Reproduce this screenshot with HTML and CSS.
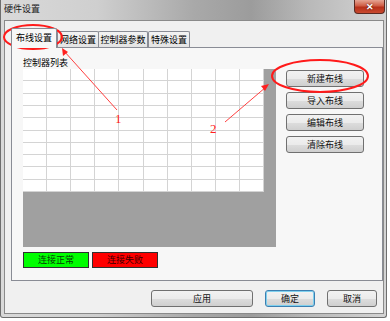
FILE: index.html
```html
<!DOCTYPE html>
<html lang="zh-CN">
<head>
<meta charset="utf-8">
<title>硬件设置</title>
<link rel="stylesheet" href="styles.css">
</head>
<body>
<div class="window">
  <div class="titlebar">
    <span class="title">硬件设置</span>
    <span class="close">✕</span>
  </div>
  <div class="client">
    <div class="tabs">
      <div class="tab active">布线设置</div>
      <div class="tab">网络设置</div>
      <div class="tab">控制器参数</div>
      <div class="tab">特殊设置</div>
    </div>
    <div class="panel">
      <div class="left">
        <div class="label">控制器列表</div>
        <div class="list">
          <div class="grid" id="grid"></div>
        </div>
        <div class="status">
          <div class="ok">连接正常</div>
          <div class="fail">连接失败</div>
        </div>
      </div>
      <div class="actions">
        <div class="btn">新建布线</div>
        <div class="btn">导入布线</div>
        <div class="btn">编辑布线</div>
        <div class="btn">清除布线</div>
      </div>
    </div>
    <div class="footer">
      <div class="btn apply">应用</div>
      <div class="btn small default">确定</div>
      <div class="btn small">取消</div>
    </div>
  </div>
</div>
<svg class="notes" width="390" height="321" viewBox="0 0 390 321">
  <ellipse cx="33" cy="37" rx="29" ry="12" fill="none" stroke="#ff1a1a" stroke-width="2"/>
  <ellipse cx="320" cy="76" rx="48" ry="16" fill="none" stroke="#ff1a1a" stroke-width="2"/>
  <line x1="117" y1="110" x2="64" y2="51" stroke="#ff4040" stroke-width="1"/>
  <polygon points="62,48 63,56 68,52" fill="#ff2020"/>
  <line x1="225" y1="122" x2="266" y2="87" stroke="#ff4040" stroke-width="1"/>
  <polygon points="269,84 261,86 265,91" fill="#ff2020"/>
  <text x="115" y="123" class="num">1</text>
  <text x="210" y="133" class="num">2</text>
</svg>
<script>
  var g = document.getElementById('grid');
  for (var i = 0; i < 100; i++) { var c = document.createElement('div'); c.className = 'cell'; g.appendChild(c); }
</script>
</body>
</html>
```
FILE: styles.css
```css
html, body {
  margin: 0;
  padding: 0;
}
body {
  width: 390px;
  height: 321px;
  overflow: hidden;
  background: #ffffff;
  font-family: "Noto Sans CJK SC", "Noto Sans", sans-serif;
  font-size: 9px;
  color: #000;
  position: relative;
}
.window {
  width: 387px;
  height: 318px;
  box-sizing: border-box;
  padding: 0 2px 3px 3px;
  border: 1px solid #6e6e6e;
  border-top: none;
  border-radius: 0 0 3px 3px;
  background: linear-gradient(to right, #d9d9d9 0%, #cfcfcf 25%, #a9a9a9 50%, #9c9c9c 65%, #b9b9b9 80%, #d4d4d4 100%);
}
.titlebar {
  height: 20px;
  display: flex;
  justify-content: space-between;
  align-items: flex-start;
}
.title {
  padding-top: 3px;
  font-size: 9px;
  line-height: 12px;
  color: #1a1a1a;
}
.close {
  width: 31px;
  height: 14px;
  box-sizing: border-box;
  margin-right: -1px;
  border: 1px solid #5a2a22;
  border-top: none;
  border-radius: 0 0 4px 4px;
  background: linear-gradient(#e5a493 0%, #cf5d45 45%, #b7301a 55%, #c84a2f 100%);
  color: #fff;
  font-size: 9px;
  font-weight: bold;
  line-height: 13px;
  text-align: center;
  text-shadow: 0 0 2px #3a0a00;
}
.client {
  height: 294px;
  box-sizing: border-box;
  background: #f0f0f0;
  border: 1px solid #8a8a8a;
  padding: 7px 1px 0 6px;
}
.tabs {
  display: flex;
  align-items: flex-end;
  height: 19px;
}
.tab {
  height: 16px;
  box-sizing: border-box;
  border: 1px solid #898c95;
  border-bottom: none;
  border-radius: 2px 2px 0 0;
  background: linear-gradient(#f3f3f3, #e3e3e3);
  line-height: 15px;
  text-align: center;
  padding: 0;
  white-space: nowrap;
  margin-left: -1px;
}
.tab.active {
  height: 20px;
  margin-left: 0;
  margin-bottom: -1px;
  width: 46px;
  background: #f7f7f7;
  position: relative;
  z-index: 1;
  line-height: 18px;
}
.tab:nth-child(2) { width: 42px; margin-left: 0; }
.tab:nth-child(3) { width: 50px; }
.tab:nth-child(4) { width: 42px; margin-left: 0; }
.panel {
  height: 234px;
  width: 372px;
  box-sizing: border-box;
  border: 1px solid #898c95;
  background: #f7f7f7;
  padding: 9px 0 0 11px;
  display: flex;
  gap: 10px;
}
.left {
  display: flex;
  flex-direction: column;
}
.label {
  height: 12px;
  line-height: 12px;
}
.list {
  width: 253px;
  height: 178px;
  background: #a0a0a0;
}
.grid {
  width: 241px;
  height: 123px;
  background: #ffffff;
  display: grid;
  grid-template-columns: repeat(10, 1fr);
  grid-template-rows: repeat(10, 1fr);
}
.cell {
  border-right: 1px solid #d4d4d4;
  border-bottom: 1px solid #d4d4d4;
}
.status {
  display: flex;
  gap: 3px;
  margin-top: 5px;
}
.ok, .fail {
  width: 66px;
  height: 16px;
  box-sizing: border-box;
  border: 1px solid #303030;
  text-align: center;
  line-height: 14px;
}
.ok { background: #00ff00; color: #063a06; }
.fail { background: #ff0000; color: #3a0000; }
.actions {
  display: flex;
  flex-direction: column;
  gap: 5px;
  margin-top: 13px;
}
.btn {
  width: 78px;
  height: 17px;
  box-sizing: border-box;
  border: 1px solid #707070;
  border-radius: 3px;
  background: linear-gradient(#f2f2f2 0%, #ebebeb 50%, #dddddd 51%, #cfcfcf 100%);
  text-align: center;
  line-height: 15px;
  color: #111;
}
.footer {
  display: flex;
  justify-content: flex-end;
  gap: 12px;
  padding-right: 5px;
  margin-top: 9px;
}
.btn.apply { width: 102px; }
.btn.small { width: 50px; }
.btn.default {
  border-color: #3c7fb1;
  box-shadow: inset 0 0 0 1px #7fd0ee;
}
.notes {
  position: absolute;
  left: 0;
  top: 0;
  pointer-events: none;
}
.num {
  font-family: "Liberation Serif", serif;
  font-size: 13px;
  fill: #ff2020;
}
```
